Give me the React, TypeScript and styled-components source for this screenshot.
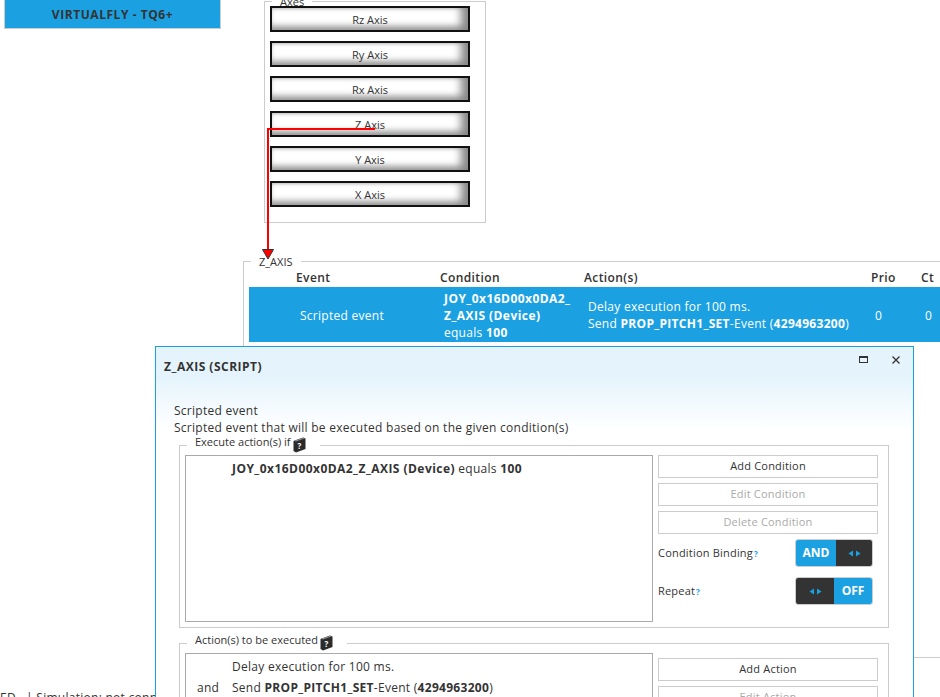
import React from 'react';
import styled, { createGlobalStyle } from 'styled-components';

const Global = createGlobalStyle`
	html, body {
		margin: 0;
		padding: 0;
		background: #fff;
	}
	body {
		font-family: "Open Sans", "Noto Sans", "Liberation Sans", sans-serif;
		font-size: 12px;
		letter-spacing: 0.27px;
		color: #333;
	}
	b {
		font-weight: 700;
		letter-spacing: 0.45px;
	}
`;

const Page = styled.div`
	position: relative;
	width: 940px;
	height: 697px;
	overflow: hidden;
	background: #fff;
`;

const TopRow = styled.div`
	display: flex;
	align-items: flex-start;
	padding-left: 4px;
	height: 261px;
`;

const Title = styled.div`
	box-sizing: border-box;
	width: 217px;
	height: 29px;
	background: #1ba1e2;
	border: 1px solid #ccc;
	border-top: none;
	display: flex;
	align-items: center;
	justify-content: center;
	font-weight: 700;
	font-size: 12px;
	letter-spacing: 0.55px;
	color: #333;
`;

const Group = styled.fieldset`
	box-sizing: border-box;
	margin: 0;
	padding: 0;
	border: 1px solid #ccc;
	min-width: 0;
`;

const AxesGroup = styled(Group)`
	width: 222px;
	height: 228px;
	margin: -5px 0 0 43px;
	padding: 0 5px;
	display: flex;
	flex-direction: column;
`;

const Legend = styled.legend`
	font-size: 11px;
	line-height: 13px;
	letter-spacing: 0;
	margin-left: 2px;
	padding: 0 8px;
	color: #333;
`;

const AxisList = styled.div`
	display: flex;
	flex-direction: column;
	gap: 9px;
	margin-top: -2px;
`;

const AxisButton = styled.div`
	box-sizing: border-box;
	width: 200px;
	height: 26px;
	border: 2px solid #111;
	background: #fff;
	box-shadow: inset -11px 0 8px -4px #888, inset 0 -7px 6px -3px #999, inset 0 2px 3px -1px #ccc;
	display: flex;
	align-items: center;
	justify-content: center;
	font-size: 11px;
	letter-spacing: 0;
	color: #333;
`;

const EventGroup = styled(Group)`
	width: 760px;
	height: 397px;
	margin-left: 243px;
	padding: 0 5px;
`;

const EventLegend = styled(Legend)`
	line-height: 0;
`;

const EventColumns = '47px 144px 144px 287px 50px 1fr';

const EventHead = styled.div`
	display: grid;
	grid-template-columns: ${EventColumns};
	height: 25px;
	align-items: end;
	line-height: 19px;
	font-weight: 600;
	font-size: 12px;
	letter-spacing: 0.4px;
	color: #333;
`;

const EventRow = styled.div`
	box-sizing: border-box;
	display: grid;
	grid-template-columns: ${EventColumns};
	height: 55px;
	padding-top: 2px;
	align-items: center;
	background: #1ba1e2;
	color: #fff;
	font-size: 12px;
	line-height: 17px;
`;

const Cell = styled.div<{ $inset?: boolean }>`
	padding-left: ${(props) => (props.$inset ? '4px' : '0')};
	white-space: nowrap;
`;

const ActionCell = styled(Cell)`
	padding-bottom: 2px;

	b {
		letter-spacing: 0.3px;
	}
`;

const StatusLine = styled.div`
	margin-top: 33px;
	height: 14px;
	font-size: 12px;
	line-height: 14px;
	white-space: pre;
	color: #333;
`;

const Wire = styled.svg`
	position: absolute;
	left: 0;
	top: 0;
	pointer-events: none;
`;

const Dialog = styled.div`
	position: absolute;
	left: 155px;
	top: 346px;
	width: 759px;
	height: 420px;
	box-sizing: border-box;
	border: 1px solid #1ba1e2;
	background: linear-gradient(#e5f4fc 0, #e5f4fc 30px, #fff 82px);
`;

const DialogHeader = styled.div`
	display: flex;
	align-items: center;
	justify-content: space-between;
	height: 38px;
	padding: 0 13px 0 8px;
`;

const DialogTitle = styled.div`
	font-weight: 700;
	font-size: 12px;
	letter-spacing: 0.5px;
	color: #333;
`;

const WindowButtons = styled.div`
	display: flex;
	align-items: center;
	gap: 24px;
	margin-top: -13px;
`;

const DialogBody = styled.div`
	padding: 17px 24px 0 18px;
`;

const Description = styled.div`
	font-size: 12px;
	line-height: 17px;
	color: #333;
	white-space: nowrap;
`;

const SectionGroup = styled(Group)`
	width: 710px;
	margin: 1px 0 7px 5px;
	padding: 2px 5px 5px;
`;

const SectionLegend = styled(Legend)`
	display: flex;
	align-items: flex-start;
	gap: 2px;
	padding: 0 14px 0 8px;
	height: 16px;
	line-height: 9px;
`;

const SectionRow = styled.div<{ $height: number }>`
	display: flex;
	gap: 5px;
	height: ${(props) => props.$height}px;
`;

const ListBox = styled.div`
	box-sizing: border-box;
	width: 468px;
	border: 1px solid #aaa;
	padding: 2px 0;
`;

const ListRow = styled.div<{ $tightBold?: boolean }>`
	display: grid;
	grid-template-columns: 46px 1fr;
	font-size: 12px;
	line-height: 21px;
	white-space: nowrap;

	b {
		letter-spacing: ${(props) => (props.$tightBold ? '0.3px' : '0.45px')};
	}
`;

const Joiner = styled.div`
	padding-left: 11px;
`;

const Side = styled.div<{ $offset?: number }>`
	box-sizing: border-box;
	width: 220px;
	padding-top: ${(props) => props.$offset || 0}px;
	display: flex;
	flex-direction: column;
	gap: 5px;
`;

const SideButton = styled.div<{ $disabled?: boolean }>`
	box-sizing: border-box;
	height: 23px;
	flex: none;
	padding-bottom: 2px;
	border: 1px solid #ccc;
	display: flex;
	align-items: center;
	justify-content: center;
	font-size: 11px;
	letter-spacing: 0.2px;
	color: ${(props) => (props.$disabled ? '#aaa' : '#333')};
`;

const OptionRow = styled.div`
	display: flex;
	align-items: center;
	justify-content: space-between;
	height: 28px;
	padding-right: 5px;
	margin-bottom: 5px;
	font-size: 11px;
	letter-spacing: 0.2px;
`;

const OptionLabel = styled.span`
	padding-bottom: 2px;
`;

const Hint = styled.span`
	color: #1ba1e2;
	font-size: 8px;
	font-weight: 700;
	margin-left: 1px;
`;

const Toggle = styled.div<{ $on: boolean }>`
	box-sizing: border-box;
	width: 78px;
	height: 28px;
	border: 1px solid #ccc;
	border-radius: 3px;
	overflow: hidden;
	display: grid;
	grid-template-columns: ${(props) => (props.$on ? '40px 1fr' : '38px 1fr')};
`;

const ToggleLabel = styled.div`
	background: #1ba1e2;
	color: #fff;
	font-weight: 700;
	font-size: 12px;
	letter-spacing: 0;
	padding-bottom: 2px;
	display: flex;
	align-items: center;
	justify-content: center;
`;

const ToggleHandle = styled.div`
	background: #333;
	display: flex;
	align-items: center;
	justify-content: center;
`;

function HandleIcon() {
	return (
		<svg width="13" height="7" viewBox="0 0 13 7">
			<path d="M5 0.5 L5 6.5 L0.5 3.5 Z" fill="#1ba1e2" />
			<path d="M8 0.5 L8 6.5 L12.5 3.5 Z" fill="#1ba1e2" />
		</svg>
	);
}

function BookIcon() {
	return (
		<svg width="13" height="16" viewBox="0 0 13 16">
			<path d="M0.5 4 L10 0.5 L12.5 1.5 L12.5 12 L3 15.5 L0.5 14 Z" fill="#2b2b2b" />
			<path d="M1 3.8 L10 0.8 L11.8 1.5 L3 4.6 Z" fill="#888" />
			<text x="4.5" y="12" fontSize="8" fontWeight="700" fill="#fff" fontFamily="Open Sans, sans-serif">?</text>
		</svg>
	);
}

function MaximizeIcon() {
	return (
		<svg width="9" height="7" viewBox="0 0 9 7">
			<rect x="0.5" y="0.5" width="8" height="6" fill="none" stroke="#333" />
			<rect x="0" y="0" width="9" height="2" fill="#333" />
		</svg>
	);
}

function CloseIcon() {
	return (
		<svg width="8" height="8" viewBox="0 0 8 8">
			<path d="M0.5 0.5 L7.5 7.5 M7.5 0.5 L0.5 7.5" stroke="#333" strokeWidth="1.3" />
		</svg>
	);
}

const axes = ['Rz Axis', 'Ry Axis', 'Rx Axis', 'Z Axis', 'Y Axis', 'X Axis'];

export default function App() {
	return (
		<Page>
			<Global />
			<TopRow>
				<Title>VIRTUALFLY - TQ6+</Title>
				<AxesGroup>
					<Legend>Axes</Legend>
					<AxisList>
						{axes.map((axis) => (
							<AxisButton key={axis}>{axis}</AxisButton>
						))}
					</AxisList>
				</AxesGroup>
			</TopRow>
			<EventGroup>
				<EventLegend>Z_AXIS</EventLegend>
				<EventHead>
					<span />
					<Cell>Event</Cell>
					<Cell>Condition</Cell>
					<Cell>Action(s)</Cell>
					<Cell>Prio</Cell>
					<Cell>Ct</Cell>
				</EventHead>
				<EventRow>
					<span />
					<Cell $inset>Scripted event</Cell>
					<Cell $inset>
						<b>JOY_0x16D00x0DA2_</b>
						<br />
						<b>Z_AXIS (Device)</b>
						<br />
						equals <b>100</b>
					</Cell>
					<ActionCell $inset>
						Delay execution for 100 ms.
						<br />
						Send <b>PROP_PITCH1_SET</b>-Event (<b>4294963200</b>)
					</ActionCell>
					<Cell $inset>0</Cell>
					<Cell $inset>0</Cell>
				</EventRow>
			</EventGroup>
			<StatusLine>{'ED   | Simulation: not connected'}</StatusLine>
			<Wire width="940" height="262" viewBox="0 0 940 262">
				<path d="M375 129 L268 129 L268 250" fill="none" stroke="#f00" strokeWidth="2" />
				<path d="M262.5 249.5 L273.5 249.5 L268 259 Z" fill="#f00" stroke="#333" strokeWidth="1" />
			</Wire>
			<Dialog>
				<DialogHeader>
					<DialogTitle>Z_AXIS (SCRIPT)</DialogTitle>
					<WindowButtons>
						<MaximizeIcon />
						<CloseIcon />
					</WindowButtons>
				</DialogHeader>
				<DialogBody>
					<Description>Scripted event</Description>
					<Description>Scripted event that will be executed based on the given condition(s)</Description>
					<SectionGroup>
						<SectionLegend>
							Execute action(s) if <BookIcon />
						</SectionLegend>
						<SectionRow $height={167}>
							<ListBox>
								<ListRow>
									<span />
									<span>
										<b>JOY_0x16D00x0DA2_Z_AXIS (Device)</b> equals <b>100</b>
									</span>
								</ListRow>
							</ListBox>
							<Side>
								<SideButton>Add Condition</SideButton>
								<SideButton $disabled>Edit Condition</SideButton>
								<SideButton $disabled>Delete Condition</SideButton>
								<OptionRow>
									<OptionLabel>
										Condition Binding<Hint>?</Hint>
									</OptionLabel>
									<Toggle $on>
										<ToggleLabel>AND</ToggleLabel>
										<ToggleHandle>
											<HandleIcon />
										</ToggleHandle>
									</Toggle>
								</OptionRow>
								<OptionRow>
									<OptionLabel>
										Repeat<Hint>?</Hint>
									</OptionLabel>
									<Toggle $on={false}>
										<ToggleHandle>
											<HandleIcon />
										</ToggleHandle>
										<ToggleLabel>OFF</ToggleLabel>
									</Toggle>
								</OptionRow>
							</Side>
						</SectionRow>
					</SectionGroup>
					<SectionGroup>
						<SectionLegend>
							Action(s) to be executed <BookIcon />
						</SectionLegend>
						<SectionRow $height={120}>
							<ListBox>
								<ListRow>
									<span />
									<span>Delay execution for 100 ms.</span>
								</ListRow>
								<ListRow $tightBold>
									<Joiner>and</Joiner>
									<span>
										Send <b>PROP_PITCH1_SET</b>-Event (<b>4294963200</b>)
									</span>
								</ListRow>
							</ListBox>
							<Side $offset={5}>
								<SideButton>Add Action</SideButton>
								<SideButton $disabled>Edit Action</SideButton>
							</Side>
						</SectionRow>
					</SectionGroup>
				</DialogBody>
			</Dialog>
		</Page>
	);
}
